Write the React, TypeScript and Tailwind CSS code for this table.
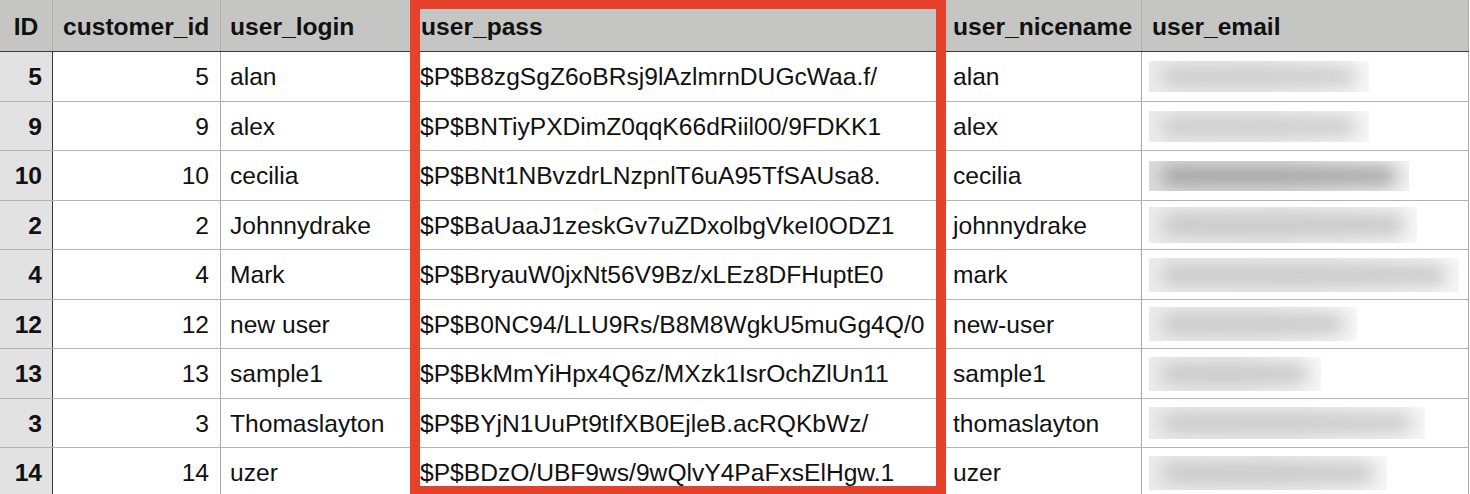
import React from "react";

type Row = {
  id: string;
  cid: string;
  login: string;
  pass: string;
  nice: string;
  ew: number;
  eh: number;
  dark?: boolean;
};

const rows: Row[] = [
  { id: "5", cid: "5", login: "alan", pass: "$P$B8zgSgZ6oBRsj9lAzlmrnDUGcWaa.f/", nice: "alan", ew: 220, eh: 31 },
  { id: "9", cid: "9", login: "alex", pass: "$P$BNTiyPXDimZ0qqK66dRiil00/9FDKK1", nice: "alex", ew: 220, eh: 31 },
  { id: "10", cid: "10", login: "cecilia", pass: "$P$BNt1NBvzdrLNzpnlT6uA95TfSAUsa8.", nice: "cecilia", ew: 260, eh: 30, dark: true },
  { id: "2", cid: "2", login: "Johnnydrake", pass: "$P$BaUaaJ1zeskGv7uZDxolbgVkeI0ODZ1", nice: "johnnydrake", ew: 268, eh: 36 },
  { id: "4", cid: "4", login: "Mark", pass: "$P$BryauW0jxNt56V9Bz/xLEz8DFHuptE0", nice: "mark", ew: 310, eh: 34 },
  { id: "12", cid: "12", login: "new user", pass: "$P$B0NC94/LLU9Rs/B8M8WgkU5muGg4Q/0", nice: "new-user", ew: 208, eh: 34 },
  { id: "13", cid: "13", login: "sample1", pass: "$P$BkMmYiHpx4Q6z/MXzk1IsrOchZlUn11", nice: "sample1", ew: 172, eh: 34 },
  { id: "3", cid: "3", login: "Thomaslayton", pass: "$P$BYjN1UuPt9tIfXB0EjleB.acRQKbWz/", nice: "thomaslayton", ew: 276, eh: 32 },
  { id: "14", cid: "14", login: "uzer", pass: "$P$BDzO/UBF9ws/9wQlvY4PaFxsElHgw.1", nice: "uzer", ew: 238, eh: 34 },
];

const grid = "grid grid-cols-[53px_168px_190px_535px_196px_327px]";

function Blur({ w, h, dark }: { w: number; h: number; dark?: boolean }) {
  return (
    <div
      className={`overflow-hidden px-[12px] py-[7px] bg-gradient-to-r ${
        dark ? "from-[#dcdcdc] via-[#dedede] to-[#f2f2f2]" : "from-[#ececec] via-[#eaeaea] to-[#f7f7f7]"
      }`}
      style={{ width: w, height: h }}
    >
      <div
        className={`h-full w-full rounded-full blur-[9px] ${dark ? "bg-[#979797]" : "bg-[#c6c6c6]"}`}
      />
    </div>
  );
}

export default function App() {
  return (
    <div className="relative h-[494px] w-[1470px] overflow-hidden bg-white text-[24.6px] text-[#111] [font-family:'Liberation_Sans',Arial,sans-serif]">
      <div className="w-[1469px]">
        <div className={`${grid} h-[52px] border-b border-[#3a3a3a] bg-[#c5c6c4] font-bold`}>
          <div className="flex items-center justify-center border-r border-[#adadad] pt-[3px]">ID</div>
          <div className="flex items-center border-r border-[#adadad] pl-[10px] pt-[3px]">customer_id</div>
          <div className="flex items-center border-r border-[#adadad] pl-[9px] pt-[3px]">user_login</div>
          <div className="flex items-center border-r border-[#adadad] pl-[10px] pt-[3px]">user_pass</div>
          <div className="flex items-center border-r border-[#adadad] pl-[7px] pt-[3px]">user_nicename</div>
          <div className="flex items-center border-r border-[#adadad] pl-[10px] pt-[3px]">user_email</div>
        </div>
        {rows.map((r) => (
          <div key={r.id} className={`${grid} h-[49.5px] border-b border-[#b3b3b3]`}>
            <div className="flex items-center justify-end border-r border-[#3a3a3a] bg-[#e2e2e2] pr-[10px] pt-[3px] font-bold">
              {r.id}
            </div>
            <div className="flex items-center justify-end border-r border-[#a8a8a8] pr-[11px] pt-[3px]">{r.cid}</div>
            <div className="flex items-center border-r border-[#a8a8a8] pl-[9px] pt-[3px]">{r.login}</div>
            <div className="flex items-center border-r border-[#a8a8a8] pl-[9px] pt-[3px] whitespace-nowrap">{r.pass}</div>
            <div className="flex items-center border-r border-[#a8a8a8] pl-[7px] pt-[3px]">{r.nice}</div>
            <div className="flex items-center border-r border-[#a8a8a8] pl-[7px] pt-[1px]">
              <Blur w={r.ew} h={r.eh} dark={r.dark} />
            </div>
          </div>
        ))}
      </div>
      <div className="pointer-events-none absolute left-[410px] top-0 h-[494px] w-[536px] border-x-[10px] border-t-[9px] border-b-[8px] border-[#e6412b]" />
    </div>
  );
}
